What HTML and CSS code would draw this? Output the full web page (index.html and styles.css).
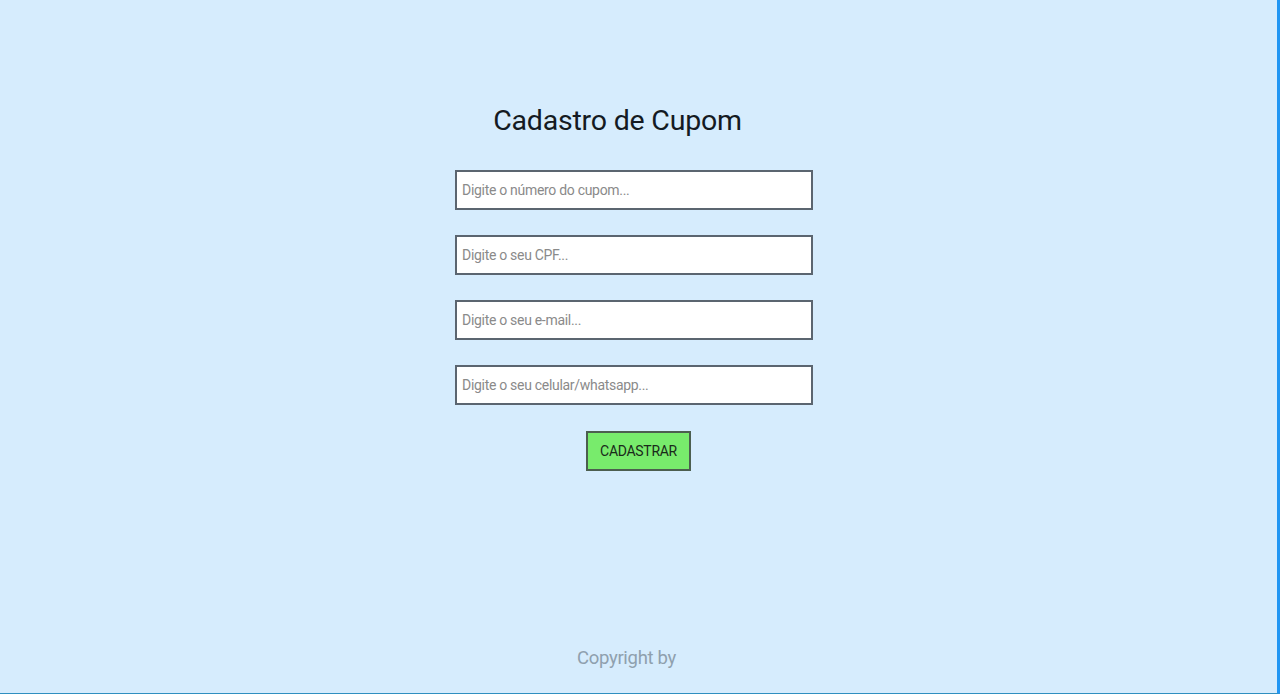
FILE: index.html
```html
<!DOCTYPE html>
<html lang="pt-BR">
<head>
<meta charset="utf-8">
<title>Cadastro de Cupom</title>
<link rel="stylesheet" href="styles.css">
</head>
<body>
<div class="page">
  <main class="main">
    <h1 class="title">Cadastro de Cupom</h1>
    <form class="form">
      <input class="field" type="text" placeholder="Digite o número do cupom...">
      <input class="field" type="text" placeholder="Digite o seu CPF...">
      <input class="field" type="text" placeholder="Digite o seu e-mail...">
      <input class="field" type="text" placeholder="Digite o seu celular/whatsapp...">
      <button class="btn" type="button">CADASTRAR</button>
    </form>
  </main>
  <footer class="footer">Copyright by</footer>
</div>
</body>
</html>
```
FILE: styles.css
```css
html, body {
  margin: 0;
  padding: 0;
  height: 100%;
}
body {
  background: #d6ecfd;
  font-family: "Roboto", "Noto Sans", sans-serif;
}
.page {
  box-sizing: border-box;
  height: 694px;
  border-right: 3px solid #2196f3;
  border-bottom: 1px solid #2f8fc0;
  display: flex;
  flex-direction: column;
  align-items: center;
}
.main {
  display: flex;
  flex-direction: column;
  align-items: center;
  padding-top: 101px;
  padding-right: 9px;
  flex: 1;
}
.title {
  margin: 0 0 0 -33px;
  font-weight: 400;
  font-size: 28.5px;
  line-height: 40px;
  color: #141a22;
  letter-spacing: -0.2px;
}
.form {
  margin-top: 29px;
  display: flex;
  flex-direction: column;
  align-items: center;
  gap: 25px;
}
.field {
  box-sizing: border-box;
  width: 358px;
  height: 40px;
  border: 2px solid #5b6570;
  background: #fff;
  padding: 0 5px;
  font-family: inherit;
  font-size: 14px;
  color: #333;
  outline: none;
}
.field::placeholder {
  color: #8a8a8a;
  letter-spacing: -0.3px;
}
.btn {
  box-sizing: border-box;
  margin: 1px 0 0 9px;
  width: 105px;
  height: 40px;
  background: #78eb6c;
  border: 2px solid #4c5e4f;
  font-family: inherit;
  font-size: 14px;
  color: #1a2a1a;
  letter-spacing: -0.3px;
  padding: 0;
}
.footer {
  margin: 0 0 24px -24px;
  font-size: 18.5px;
  color: #8fa0ae;
  letter-spacing: -0.3px;
}
```
